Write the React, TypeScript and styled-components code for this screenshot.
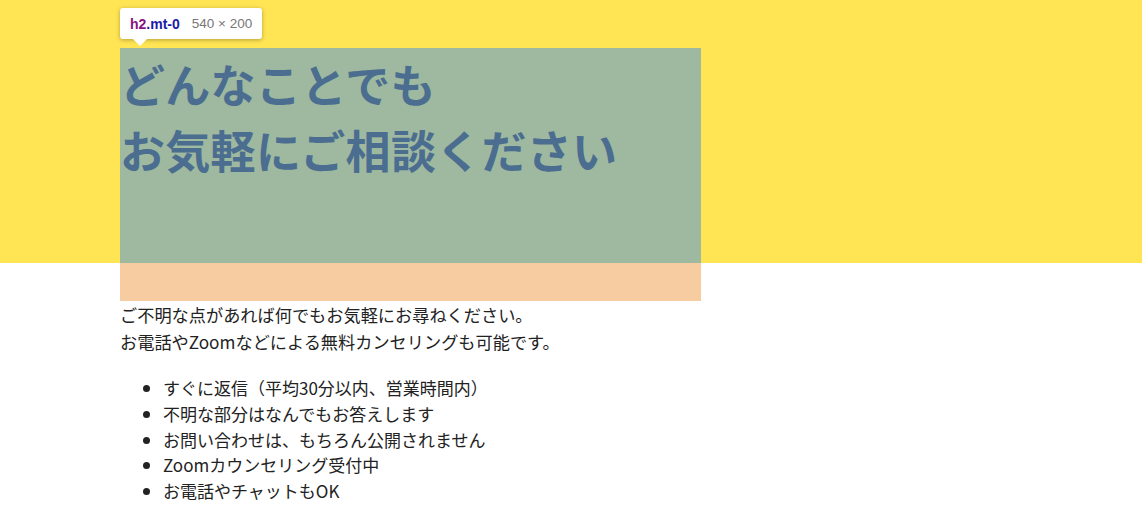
import React from 'react'
import styled, { createGlobalStyle } from 'styled-components'

const GlobalStyle = createGlobalStyle`
  html, body {
    margin: 0;
    padding: 0;
    background: #fff;
  }
  body {
    font-family: "Noto Sans CJK JP", "Noto Sans", sans-serif;
    color: #222;
  }
`

const Hero = styled.section`
  background-color: #ffe553;
  padding: 48px 0 0 120px;
  position: relative;
`

const Heading = styled.h2`
  box-sizing: border-box;
  margin: 0;
  padding-top: 3px;
  width: 581px;
  height: 215px;
  background-color: #9eb9a0;
  color: #4b6d8f;
  font-size: 45px;
  font-weight: 700;
  letter-spacing: 0.3px;
  line-height: 66px;
`

const HeadingMargin = styled.div`
  margin-left: 120px;
  width: 581px;
  height: 38px;
  background-color: #f8cca1;
`

const Tooltip = styled.div`
  position: absolute;
  left: 120px;
  top: 8px;
  height: 31px;
  padding: 0 10px;
  display: flex;
  align-items: center;
  gap: 12px;
  background: #fff;
  border-radius: 3px;
  box-shadow: 0 1px 4px rgba(0, 0, 0, 0.3);
  font-family: "Liberation Sans", Arial, sans-serif;
  white-space: nowrap;

  &::after {
    content: '';
    position: absolute;
    left: 13px;
    bottom: -7px;
    border-left: 7px solid transparent;
    border-right: 7px solid transparent;
    border-top: 7px solid #fff;
  }
`

const Selector = styled.span`
  font-size: 14px;
  font-weight: 700;
`

const TagName = styled.span`
  color: #881280;
`

const ClassName = styled.span`
  color: #1a1aa6;
`

const Size = styled.span`
  font-size: 13.5px;
  color: #777;
`

const Body = styled.div`
  padding-left: 120px;
  font-size: 17.2px;
`

const Lead = styled.p`
  margin: 0;
  line-height: 27px;
`

const Points = styled.ul`
  margin: 20px 0 0;
  padding-left: 43px;
  font-size: 17px;
  line-height: 25.8px;
`

const points = [
  'すぐに返信（平均30分以内、営業時間内）',
  '不明な部分はなんでもお答えします',
  'お問い合わせは、もちろん公開されません',
  'Zoomカウンセリング受付中',
  'お電話やチャットもOK',
]

const App = () => {
  return (
    <>
      <GlobalStyle />
      <Hero>
        <Tooltip>
          <Selector>
            <TagName>h2</TagName>
            <ClassName>.mt-0</ClassName>
          </Selector>
          <Size>540 × 200</Size>
        </Tooltip>
        <Heading className='mt-0'>
          どんなことでも
          <br />
          お気軽にご相談ください
        </Heading>
      </Hero>
      <HeadingMargin />
      <Body>
        <Lead>
          ご不明な点があれば何でもお気軽にお尋ねください。
          <br />
          お電話やZoomなどによる無料カンセリングも可能です。
        </Lead>
        <Points>
          {points.map((p) => (
            <li key={p}>{p}</li>
          ))}
        </Points>
      </Body>
    </>
  )
}

export default App
